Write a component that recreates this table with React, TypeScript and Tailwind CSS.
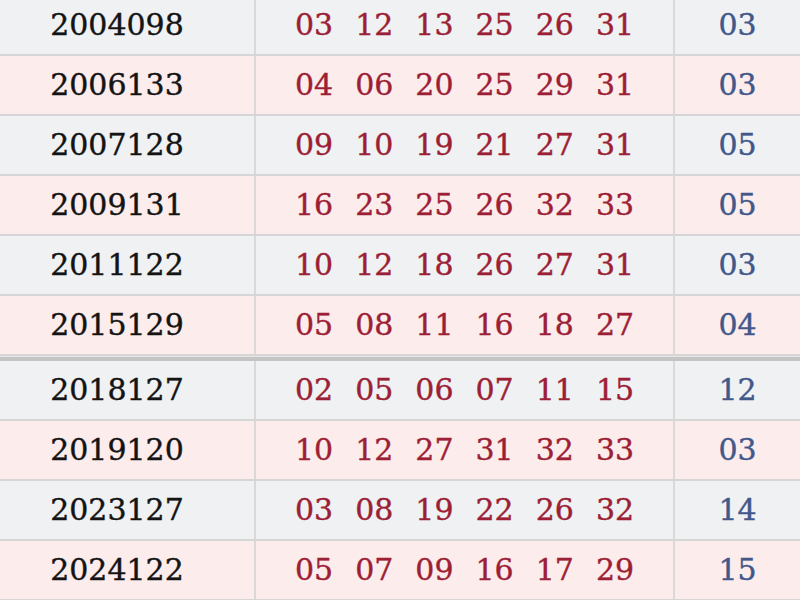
import React from 'react';

type Draw = { issue: string; reds: string[]; blue: string };

const draws: Draw[] = [
  { issue: '2004098', reds: ['03', '12', '13', '25', '26', '31'], blue: '03' },
  { issue: '2006133', reds: ['04', '06', '20', '25', '29', '31'], blue: '03' },
  { issue: '2007128', reds: ['09', '10', '19', '21', '27', '31'], blue: '05' },
  { issue: '2009131', reds: ['16', '23', '25', '26', '32', '33'], blue: '05' },
  { issue: '2011122', reds: ['10', '12', '18', '26', '27', '31'], blue: '03' },
  { issue: '2015129', reds: ['05', '08', '11', '16', '18', '27'], blue: '04' },
  { issue: '2018127', reds: ['02', '05', '06', '07', '11', '15'], blue: '12' },
  { issue: '2019120', reds: ['10', '12', '27', '31', '32', '33'], blue: '03' },
  { issue: '2023127', reds: ['03', '08', '19', '22', '26', '32'], blue: '14' },
  { issue: '2024122', reds: ['05', '07', '09', '16', '17', '29'], blue: '15' },
];

function Row({ d, pink }: { d: Draw; pink: boolean }) {
  return (
    <div
      className={`grid grid-cols-[256px_419px_1fr] h-[60px] border-b-2 border-[#d6d6d6] ${
        pink ? 'bg-[#fcecec]' : 'bg-[#eff1f3]'
      }`}
    >
      <div className="flex items-center justify-center pr-5 border-r-2 border-[#d9d9d9] text-[#141414]">
        {d.issue}
      </div>
      <div className="flex items-center justify-center gap-[22px] border-r-2 border-[#d9d9d9] text-[#9c1f36]">
        {d.reds.map((n, i) => (
          <span key={i}>{n}</span>
        ))}
      </div>
      <div className="flex items-center justify-center text-[#42578a]">{d.blue}</div>
    </div>
  );
}

export default function App() {
  return (
    <div className="w-[800px] h-[600px] overflow-hidden bg-[#eff1f3] font-['DejaVu_Serif',serif] text-[30px] leading-none [-webkit-text-stroke:0.4px]">
      <div className="-mt-[4px]">
        {draws.slice(0, 6).map((d, i) => (
          <Row key={d.issue} d={d} pink={i % 2 === 1} />
        ))}
        <div className="h-[5px] bg-[#c4c4c4] border-t border-[#e6e6e6]" />
        {draws.slice(6).map((d, i) => (
          <Row key={d.issue} d={d} pink={i % 2 === 1} />
        ))}
      </div>
    </div>
  );
}
